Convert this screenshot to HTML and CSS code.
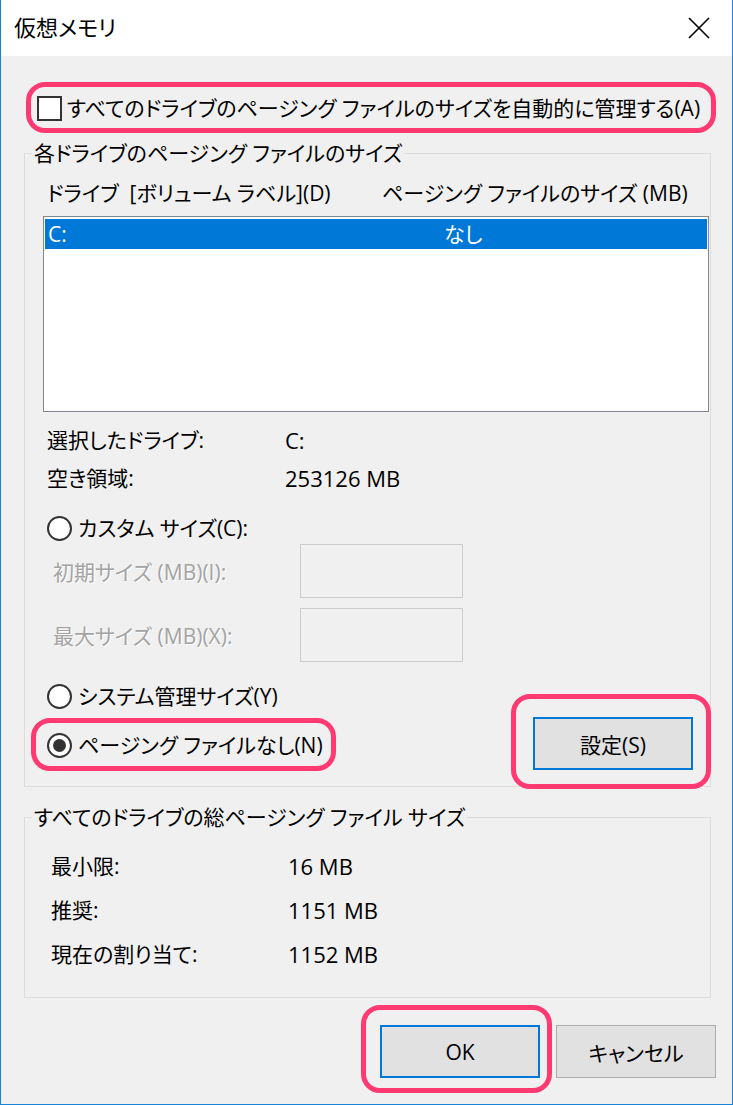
FILE: index.html
```html
<!DOCTYPE html>
<html lang="ja">
<head>
<meta charset="utf-8">
<title>仮想メモリ</title>
<link rel="stylesheet" href="styles.css">
</head>
<body>
<div class="window">
  <div class="titlebar">
    <span class="title">仮想メモリ</span>
    <svg class="close" width="24" height="24" viewBox="0 0 24 24"><path d="M2 2 L22 22 M22 2 L2 22" stroke="#000" stroke-width="1.6" fill="none"/></svg>
  </div>
  <div class="content">
    <div class="auto-row hl-auto">
      <span class="checkbox"></span>
      <span>すべてのドライブのページング ファイルのサイズを自動的に管理する(A)</span>
    </div>

    <fieldset class="group g1">
      <legend>各ドライブのページング ファイルのサイズ</legend>
      <div class="list-head">
        <span class="col1">ドライブ&nbsp;&nbsp;[ボリューム ラベル](D)</span>
        <span class="col2">ページング ファイルのサイズ (MB)</span>
      </div>
      <div class="listbox">
        <div class="list-row selected"><span class="c1">C:</span><span class="c2">なし</span></div>
      </div>
      <div class="info">
        <div class="info-row"><span class="info-label">選択したドライブ:</span><span class="value">C:</span></div>
        <div class="info-row"><span class="info-label">空き領域:</span><span class="value">253126 MB</span></div>
      </div>
      <div class="radio-row custom"><span class="radio"></span><span>カスタム サイズ(C):</span></div>
      <div class="size-row"><span class="size-label">初期サイズ (MB)(I):</span><span class="textbox"></span></div>
      <div class="size-row second"><span class="size-label">最大サイズ (MB)(X):</span><span class="textbox"></span></div>
      <div class="bottom-row">
        <div class="radios">
          <div class="radio-row"><span class="radio"></span><span>システム管理サイズ(Y)</span></div>
          <div class="radio-row hl-none"><span class="radio checked"></span><span>ページング ファイルなし(N)</span></div>
        </div>
        <span class="btn-wrap hl-set"><button class="btn default">設定(S)</button></span>
      </div>
    </fieldset>

    <fieldset class="group g2">
      <legend>すべてのドライブの総ページング ファイル サイズ</legend>
      <div class="totals">
        <div class="total-row"><span class="total-label">最小限:</span><span class="value">16 MB</span></div>
        <div class="total-row"><span class="total-label">推奨:</span><span class="value">1151 MB</span></div>
        <div class="total-row"><span class="total-label">現在の割り当て:</span><span class="value">1152 MB</span></div>
      </div>
    </fieldset>

    <div class="buttons">
      <span class="btn-wrap hl-ok"><button class="btn default">OK</button></span>
      <span class="btn-wrap"><button class="btn">キャンセル</button></span>
    </div>
  </div>
</div>
</body>
</html>
```

FILE: styles.css
```css
*, *::before, *::after { box-sizing: border-box; }

html, body {
  margin: 0;
  padding: 0;
}

body {
  width: 733px;
  height: 1105px;
  background: #f0f0f0;
  font-family: "Open Sans", "Noto Sans CJK JP", sans-serif;
  font-feature-settings: "palt";
  font-size: 21px;
  color: #000;
}

.window {
  width: 733px;
  height: 1105px;
  border: 1px solid #1883d7;
  border-top: none;
  background: #f0f0f0;
  display: flex;
  flex-direction: column;
}

.titlebar {
  height: 56px;
  background: #fff;
  display: flex;
  align-items: center;
  justify-content: space-between;
  padding-left: 13px;
  padding-right: 21px;
}

.title {
  font-size: 22px;
  line-height: 26px;
  margin-top: -2px;
}

.close { display: block; }

.content {
  padding: 0 21px 0 23px;
  display: flex;
  flex-direction: column;
}

/* auto-manage checkbox */
.auto-row {
  position: relative;
  margin-top: 39px;
  margin-left: 13px;
  height: 26px;
  display: flex;
  align-items: center;
  gap: 5px;
  line-height: 26px;
}

.checkbox {
  width: 25px;
  height: 25px;
  border: 2px solid #333;
  background: #fff;
  flex: none;
}

/* pink highlight outlines */
.hl-auto::after,
.hl-none::after,
.hl-set::after,
.hl-ok::after {
  content: "";
  position: absolute;
  border: 5px solid #ff3a72;
  border-radius: 19px;
  pointer-events: none;
}

.hl-auto::after { left: -11px; top: -13px; width: 690px; height: 51px; }

/* group boxes */
.group {
  margin: 0;
  padding: 0;
  border: 1px solid #dcdcdc;
  min-width: 0;
}

.group legend {
  margin-left: 7px;
  padding: 0 2px;
  line-height: 26px;
}

.g1 { margin-top: 19px; padding-bottom: 16px; }

.list-head {
  margin-top: 14px;
  height: 26px;
  line-height: 26px;
  display: flex;
  padding-left: 22px;
  white-space: nowrap;
}

.col1 { width: 335px; }

.listbox {
  margin-top: 10px;
  margin-left: 18px;
  width: 666px;
  height: 196px;
  border: 1px solid #828790;
  background: #fff;
  padding: 2px 1px;
}

.list-row {
  height: 30px;
  line-height: 30px;
  display: flex;
  padding-left: 3px;
}

.list-row.selected {
  background: #0078d7;
  color: #fff;
}

.c1 { width: 396px; }

.info { margin-top: 9px; padding-left: 22px; }

.info-row {
  height: 38px;
  line-height: 38px;
  display: flex;
}

.info-label { width: 238px; }

.value { font-size: 22px; }

.radio-row {
  position: relative;
  height: 30px;
  display: flex;
  align-items: center;
  gap: 6px;
  line-height: 30px;
  white-space: nowrap;
}

.custom { margin-top: 16px; margin-left: 22px; }

.radio {
  width: 25px;
  height: 25px;
  border: 2px solid #333;
  border-radius: 50%;
  background: #fff;
  flex: none;
  display: flex;
  align-items: center;
  justify-content: center;
}

.radio.checked::before {
  content: "";
  width: 13px;
  height: 13px;
  border-radius: 50%;
  background: #333;
}

.size-row {
  margin-top: 1px;
  display: flex;
  align-items: center;
  padding-left: 28px;
  height: 54px;
}

.size-row.second { margin-top: 10px; }

.size-label {
  width: 247px;
  color: #a3a3a3;
  text-shadow: 1px 1px 0 #fff;
  white-space: nowrap;
}

.textbox {
  width: 163px;
  height: 54px;
  border: 1px solid #cccccc;
  background: #f0f0f0;
}

.bottom-row {
  display: flex;
  align-items: flex-start;
  justify-content: space-between;
  padding-left: 22px;
  padding-right: 17px;
}

.radios {
  padding-top: 19px;
  display: flex;
  flex-direction: column;
  gap: 19px;
}

.hl-none::after { left: -16px; top: -12px; width: 305px; height: 53px; }

.btn-wrap {
  position: relative;
  display: block;
}

.bottom-row .btn-wrap { margin-top: 55px; }

.hl-set::after { left: -22px; top: -23px; width: 200px; height: 95px; }

.btn {
  display: block;
  width: 160px;
  height: 53px;
  margin: 0;
  padding: 0;
  border: 1px solid #adadad;
  background: #e1e1e1;
  font-family: inherit;
  font-feature-settings: "palt";
  font-size: 21px;
  color: #000;
}

.btn.default {
  border: 2px solid #0078d7;
}

.g2 { margin-top: 17px; }

.totals { padding: 14px 0 21px 26px; }

.total-row {
  height: 44px;
  line-height: 44px;
  display: flex;
}

.total-label { width: 237px; }

.buttons {
  margin-top: 27px;
  margin-right: -5px;
  display: flex;
  justify-content: flex-end;
  gap: 16px;
}

.hl-ok::after { left: -19px; top: -20px; width: 191px; height: 88px; }
```
